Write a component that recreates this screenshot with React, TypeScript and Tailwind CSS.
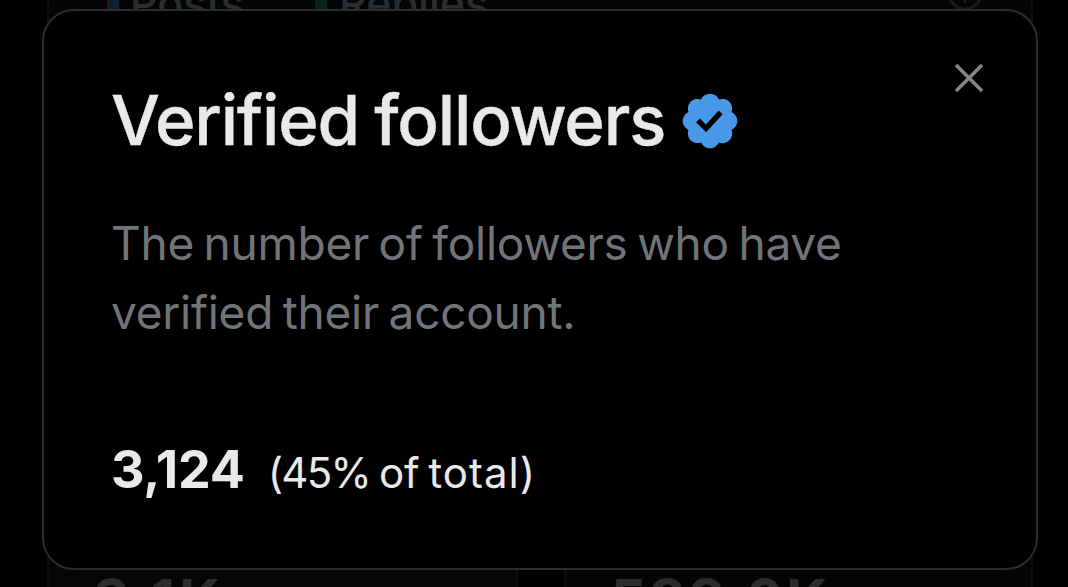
import React from "react";

function VerifiedBadge() {
  return (
    <svg viewBox="0 0 22 22" className="mt-[2px] h-[64px] w-[64px] shrink-0" aria-label="Verified account">
      <path
        fill="#4a99e9"
        d="M20.396 11c-.018-.646-.215-1.275-.57-1.816-.354-.54-.852-.972-1.438-1.246.223-.607.27-1.264.14-1.897-.131-.634-.437-1.218-.882-1.687-.47-.445-1.053-.75-1.687-.882-.633-.13-1.29-.083-1.897.14-.273-.587-.704-1.086-1.245-1.44S11.647 1.62 11 1.604c-.646.017-1.273.213-1.813.568s-.969.854-1.24 1.44c-.608-.223-1.267-.272-1.902-.14-.635.13-1.22.436-1.69.882-.445.47-.749 1.055-.878 1.688-.13.633-.08 1.29.144 1.896-.587.274-1.087.705-1.443 1.245-.356.54-.555 1.17-.574 1.817.02.647.218 1.276.574 1.817.356.54.856.972 1.443 1.245-.224.606-.274 1.263-.144 1.896.13.634.433 1.218.877 1.688.47.443 1.054.747 1.687.878.633.132 1.29.084 1.897-.136.274.586.705 1.084 1.246 1.439.54.354 1.17.551 1.816.569.647-.016 1.276-.213 1.817-.567s.972-.854 1.245-1.44c.604.239 1.266.296 1.903.164.636-.132 1.22-.447 1.68-.907.46-.46.776-1.044.908-1.681s.075-1.299-.165-1.903c.586-.274 1.084-.705 1.439-1.246.354-.54.551-1.17.569-1.816zM9.662 14.85l-3.429-3.428 1.293-1.302 2.072 2.072 4.4-4.794 1.347 1.246z"
      />
    </svg>
  );
}

function Backdrop() {
  return (
    <div className="flex h-[587px] flex-col justify-between overflow-hidden pl-[47px] text-[#2b2c2d]">
      <div className="flex h-[300px] w-[986px] justify-between border-x-2 border-[#0c0d0e] bg-[#040507] pr-[48px] pl-[58px]">
        <div className="flex">
          <div className="h-[18px] w-[12px] bg-[#0d2031]" />
          <div className="-mt-[17px] ml-[11px] w-[185px] text-[43px] leading-[40px] font-medium">Posts</div>
          <div className="h-[18px] w-[12px] bg-[#082418]" />
          <div className="-mt-[17px] ml-[12px] text-[43px] leading-[40px] font-medium">Replies</div>
        </div>
        <svg viewBox="0 0 36 36" className="-mt-[25px] h-9 w-9" fill="none" stroke="#1b1c1d" strokeWidth="3">
          <circle cx="18" cy="18" r="16" />
          <path d="M18 16v12" />
        </svg>
      </div>
      <div className="flex h-[100px] gap-[46px] text-[57px] leading-[56px] font-bold">
        <div className="w-[471px] border-x-2 border-[#0c0d0e] bg-[#040608] pt-[85px] pl-[44px] tracking-[4px]">3.1K</div>
        <div className="w-[469px] border-x-2 border-[#0c0d0e] bg-[#040507] pt-[85px] pl-[44px] tracking-[2.2px]">588.0K</div>
      </div>
    </div>
  );
}

export default function App() {
  return (
    <div className="relative h-[587px] w-[1068px] overflow-hidden bg-black font-['Inter','Liberation_Sans',sans-serif]">
      <Backdrop />
      <section
        role="dialog"
        className="absolute top-[9px] left-[42px] h-[561px] w-[996px] rounded-[32px] border-2 border-[#2b2c2d] bg-black pl-[68px] text-[#e7e9ea]"
      >
        <button type="button" aria-label="Close" className="absolute top-[52px] right-[52px] text-[#858687]">
          <svg viewBox="0 0 30 30" className="h-[30px] w-[30px]" fill="none" stroke="currentColor" strokeWidth="3.5">
            <path d="M2 2l26 26M28 2L2 28" />
          </svg>
        </button>
        <header className="flex h-[151px] items-center gap-[13px] pt-[67px]">
          <h1 className="-ml-px text-[69px] leading-[84px] font-medium tracking-[-1.2px] whitespace-nowrap [-webkit-text-stroke:0.4px_#e7e9ea] [word-spacing:-2px]">
            Verified followers
          </h1>
          <VerifiedBadge />
        </header>
        <p className="-ml-px pt-[47px] text-[46px] leading-[69px] tracking-[-0.25px] whitespace-nowrap text-[#717579] [word-spacing:-3.1px]">
          The number of followers who have
          <br />
          verified their account.
        </p>
        <div className="-ml-px flex items-baseline gap-[23px] pt-[88px] whitespace-nowrap">
          <strong className="text-[52px] leading-[69px] font-bold tracking-[-0.2px]">3,124</strong>
          <span className="text-[42px] [word-spacing:-3px]">
            <span className="tracking-[-1.7px]">(45%</span> of <span className="tracking-[1px]">total)</span>
          </span>
        </div>
      </section>
    </div>
  );
}
